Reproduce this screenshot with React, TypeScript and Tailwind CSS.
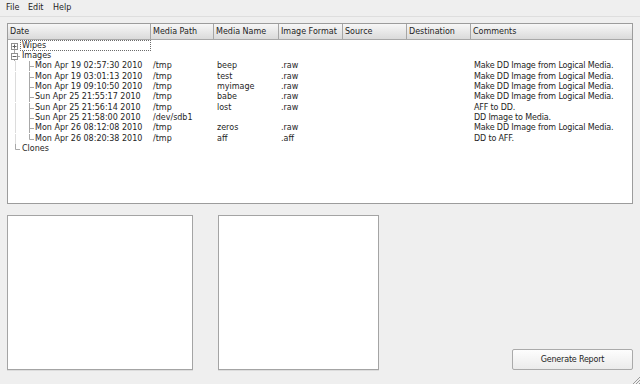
import React from 'react'

type Row = { date: string; path: string; name: string; fmt: string; comment: string }

const images: Row[] = [
  { date: 'Mon Apr 19 02:57:30 2010', path: '/tmp', name: 'beep', fmt: '.raw', comment: 'Make DD Image from Logical Media.' },
  { date: 'Mon Apr 19 03:01:13 2010', path: '/tmp', name: 'test', fmt: '.raw', comment: 'Make DD Image from Logical Media.' },
  { date: 'Mon Apr 19 09:10:50 2010', path: '/tmp', name: 'myimage', fmt: '.raw', comment: 'Make DD Image from Logical Media.' },
  { date: 'Sun Apr 25 21:55:17 2010', path: '/tmp', name: 'babe', fmt: '.raw', comment: 'Make DD Image from Logical Media.' },
  { date: 'Sun Apr 25 21:56:14 2010', path: '/tmp', name: 'lost', fmt: '.raw', comment: 'AFF to DD.' },
  { date: 'Sun Apr 25 21:58:00 2010', path: '/dev/sdb1', name: '', fmt: '', comment: 'DD Image to Media.' },
  { date: 'Mon Apr 26 08:12:08 2010', path: '/tmp', name: 'zeros', fmt: '.raw', comment: 'Make DD Image from Logical Media.' },
  { date: 'Mon Apr 26 08:20:38 2010', path: '/tmp', name: 'aff', fmt: '.aff', comment: 'DD to AFF.' },
]

const headers = [
  { label: 'Date', w: 'w-[143px]' },
  { label: 'Media Path', w: 'w-[63px]' },
  { label: 'Media Name', w: 'w-[65px]' },
  { label: 'Image Format', w: 'w-[64px]' },
  { label: 'Source', w: 'w-[64px]' },
  { label: 'Destination', w: 'w-[64px]' },
  { label: 'Comments', w: 'flex-1' },
]

const LINE = '#a8a8a8'

// top-level branch: expander box or plain line
function TopBranch({ kind }: { kind: 'plus' | 'minus' | 'last' }) {
  return (
    <svg width={12} height={10} className="shrink-0">
      {kind === 'plus' && (
        <>
          <line x1={6.5} y1={9} x2={6.5} y2={10} stroke={LINE} />
          <rect x={3.5} y={2.5} width={6} height={6} fill="white" stroke="#909090" />
          <line x1={4.5} y1={5.5} x2={8.5} y2={5.5} stroke="#606060" />
          <line x1={6.5} y1={3.5} x2={6.5} y2={7.5} stroke="#606060" />
        </>
      )}
      {kind === 'minus' && (
        <>
          <line x1={6.5} y1={0} x2={6.5} y2={2} stroke={LINE} />
          <line x1={6.5} y1={9} x2={6.5} y2={10} stroke={LINE} />
          <line x1={10} y1={5.5} x2={12} y2={5.5} stroke={LINE} />
          <rect x={3.5} y={2.5} width={6} height={6} fill="white" stroke="#909090" />
          <line x1={4.5} y1={5.5} x2={8.5} y2={5.5} stroke="#606060" />
        </>
      )}
      {kind === 'last' && (
        <>
          <line x1={7.5} y1={0} x2={7.5} y2={5.5} stroke={LINE} />
          <line x1={7.5} y1={5.5} x2={12} y2={5.5} stroke={LINE} />
        </>
      )}
    </svg>
  )
}

function ChildBranch({ last }: { last: boolean }) {
  return (
    <svg width={26} height={10} className="shrink-0">
      <line x1={7.5} y1={0} x2={7.5} y2={10} stroke="#dcdcdc" />
      <line x1={21.5} y1={0} x2={21.5} y2={last ? 5.5 : 10} stroke={LINE} />
      <line x1={21.5} y1={5.5} x2={26} y2={5.5} stroke={LINE} />
    </svg>
  )
}

function TopRow({ label, kind, focused }: { label: string; kind: 'plus' | 'minus' | 'last'; focused?: boolean }) {
  return (
    <div className={`flex items-center ${focused ? 'h-[11px]' : 'h-[10.3px]'}`}>
      <div className="flex w-[143px] items-center">
        <TopBranch kind={kind} />
        <span
          className={`flex items-center px-[1px] border ${
            focused ? 'h-[11px] flex-1 border-dotted border-[#6a6a6a]' : 'h-[10.3px] border-transparent'
          }`}
        >
          {label}
        </span>
      </div>
    </div>
  )
}

function ChildRow({ row, last }: { row: Row; last: boolean }) {
  return (
    <div className="flex h-[10.3px] items-center whitespace-nowrap">
      <div className="flex w-[143px] items-center">
        <ChildBranch last={last} />
        <span className="pl-[1px]">{row.date}</span>
      </div>
      <div className="w-[63px] pl-[2px]">{row.path}</div>
      <div className="w-[65px] pl-[3px]">{row.name}</div>
      <div className="w-[64px] pl-[2px]">{row.fmt}</div>
      <div className="w-[64px]" />
      <div className="w-[64px]" />
      <div className="flex-1 pl-[3px] tracking-[-0.15px]">{row.comment}</div>
    </div>
  )
}

export default function App() {
  return (
    <div className="relative flex h-[384px] w-[640px] flex-col overflow-hidden bg-[#efefef] font-['DejaVu_Sans',sans-serif] text-[8px] text-[#1e1e1e]">
      {/* Menu bar */}
      <div className="flex h-[17px] items-center border-b border-[#dedede] pl-[6px]">
        <span className="w-[22px]">File</span>
        <span className="w-[25px]">Edit</span>
        <span>Help</span>
      </div>

      {/* Tree */}
      <div className="mx-[7px] mt-[6px] flex h-[181px] flex-col border border-[#9c9c9c] bg-white">
        <div className="flex h-[16px] border-b border-[#a8a8a8] bg-gradient-to-b from-[#f7f7f7] to-[#dadada]">
          {headers.map((h, i) => (
            <div
              key={h.label}
              className={`${h.w} flex items-center pl-[2px] ${i < headers.length - 1 ? 'border-r border-[#a6a6a6]' : ''}`}
            >
              {h.label}
            </div>
          ))}
        </div>
        <div className="flex flex-col">
          <TopRow label="Wipes" kind="plus" focused />
          <TopRow label="Images" kind="minus" />
          {images.map((r, i) => (
            <ChildRow key={r.date} row={r} last={i === images.length - 1} />
          ))}
          <TopRow label="Clones" kind="last" />
        </div>
      </div>

      {/* Bottom panels */}
      <div className="mt-[11px] flex px-[7px]">
        <div className="h-[155px] w-[186px] border border-[#a4a4a4] bg-white shadow-[0_1px_0_#dcdcdc]" />
        <div className="ml-[25px] h-[155px] w-[161px] border border-[#a4a4a4] bg-white shadow-[0_1px_0_#dcdcdc]" />
        <div className="flex-1" />
        <button className="mt-[134px] h-[21px] w-[121px] rounded-[2px] border border-[#aaaaaa] bg-gradient-to-b from-[#fdfdfd] to-[#ebebeb] text-[8px] tracking-[-0.2px] text-[#1e1e1e]">
          Generate Report
        </button>
      </div>

      {/* size grip */}
      <svg width={8} height={8} className="absolute bottom-0 right-0">
        <line x1={8} y1={1} x2={1} y2={8} stroke="#9a9a9a" />
        <line x1={8} y1={4} x2={4} y2={8} stroke="#9a9a9a" />
        <line x1={8} y1={7} x2={7} y2={8} stroke="#9a9a9a" />
      </svg>
    </div>
  )
}
